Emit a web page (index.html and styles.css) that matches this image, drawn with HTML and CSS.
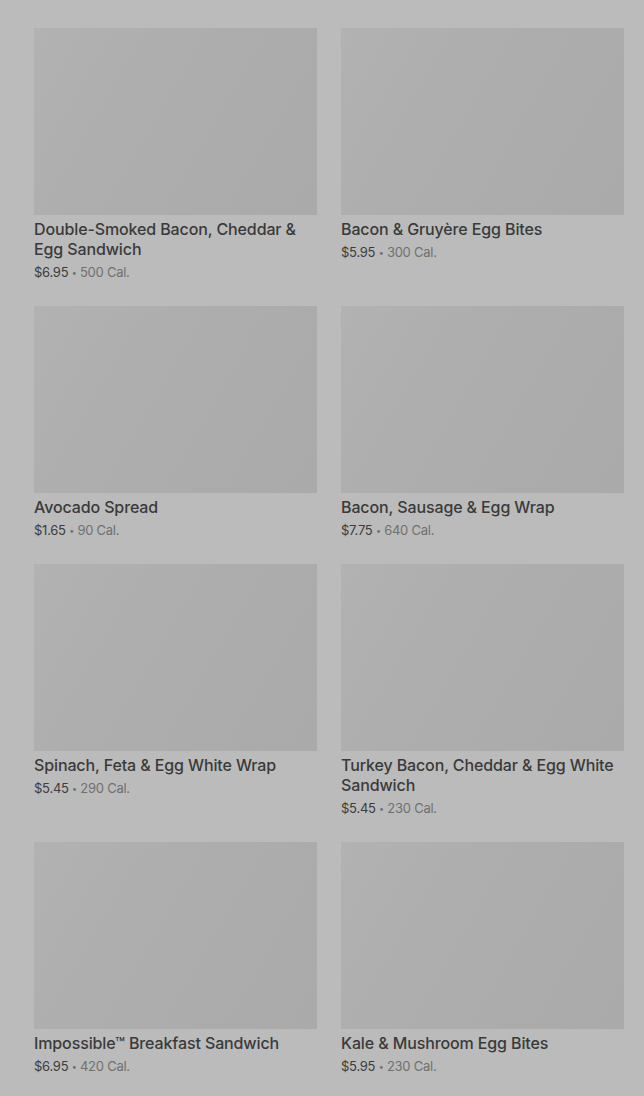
FILE: index.html
```html
<!DOCTYPE html>
<html>
<head>
<meta charset="utf-8">
<link rel="stylesheet" href="styles.css">
</head>
<body>
<div class="grid">
  <div class="card"><div class="img"></div><div class="title">Double-Smoked Bacon, Cheddar &amp; Egg Sandwich</div><div class="meta"><span class="price">$6.95</span> <span class="dot">•</span> <span>500 Cal.</span></div></div>
  <div class="card"><div class="img"></div><div class="title">Bacon &amp; Gruyère Egg Bites</div><div class="meta"><span class="price">$5.95</span> <span class="dot">•</span> <span>300 Cal.</span></div></div>
  <div class="card"><div class="img"></div><div class="title">Avocado Spread</div><div class="meta"><span class="price">$1.65</span> <span class="dot">•</span> <span>90 Cal.</span></div></div>
  <div class="card"><div class="img"></div><div class="title">Bacon, Sausage &amp; Egg Wrap</div><div class="meta"><span class="price">$7.75</span> <span class="dot">•</span> <span>640 Cal.</span></div></div>
  <div class="card"><div class="img"></div><div class="title">Spinach, Feta &amp; Egg White Wrap</div><div class="meta"><span class="price">$5.45</span> <span class="dot">•</span> <span>290 Cal.</span></div></div>
  <div class="card"><div class="img"></div><div class="title">Turkey Bacon, Cheddar &amp; Egg White Sandwich</div><div class="meta"><span class="price">$5.45</span> <span class="dot">•</span> <span>230 Cal.</span></div></div>
  <div class="card"><div class="img"></div><div class="title">Impossible™ Breakfast Sandwich</div><div class="meta"><span class="price">$6.95</span> <span class="dot">•</span> <span>420 Cal.</span></div></div>
  <div class="card"><div class="img"></div><div class="title">Kale &amp; Mushroom Egg Bites</div><div class="meta"><span class="price">$5.95</span> <span class="dot">•</span> <span>230 Cal.</span></div></div>
</div>
</body>
</html>
```
FILE: styles.css
```css
html, body {
  margin: 0;
  padding: 0;
  background: #bbbbbb;
  height: 100%;
  overflow: hidden;
}
body {
  font-family: Inter, "Liberation Sans", sans-serif;
}
.grid {
  display: grid;
  grid-template-columns: 283px 283px;
  column-gap: 24px;
  row-gap: 25px;
  padding: 28px 20px 0 34px;
}
.img {
  height: 187px;
  background: linear-gradient(120deg, #b2b2b2 0%, #adadad 45%, #aaaaaa 100%);
}
.title {
  margin-top: 4px;
  font-size: 16px;
  line-height: 20px;
  font-weight: 500;
  color: #3a3a3a;
  letter-spacing: -0.12px;
}
.meta {
  margin-top: 4px;
  font-size: 13px;
  line-height: 18px;
  height: 18px;
  color: #707070;
  letter-spacing: -0.25px;
}
.price {
  color: #3c3c3c;
}
.dot {
  font-size: 9px;
  line-height: 0;
  vertical-align: 1px;
}
```
